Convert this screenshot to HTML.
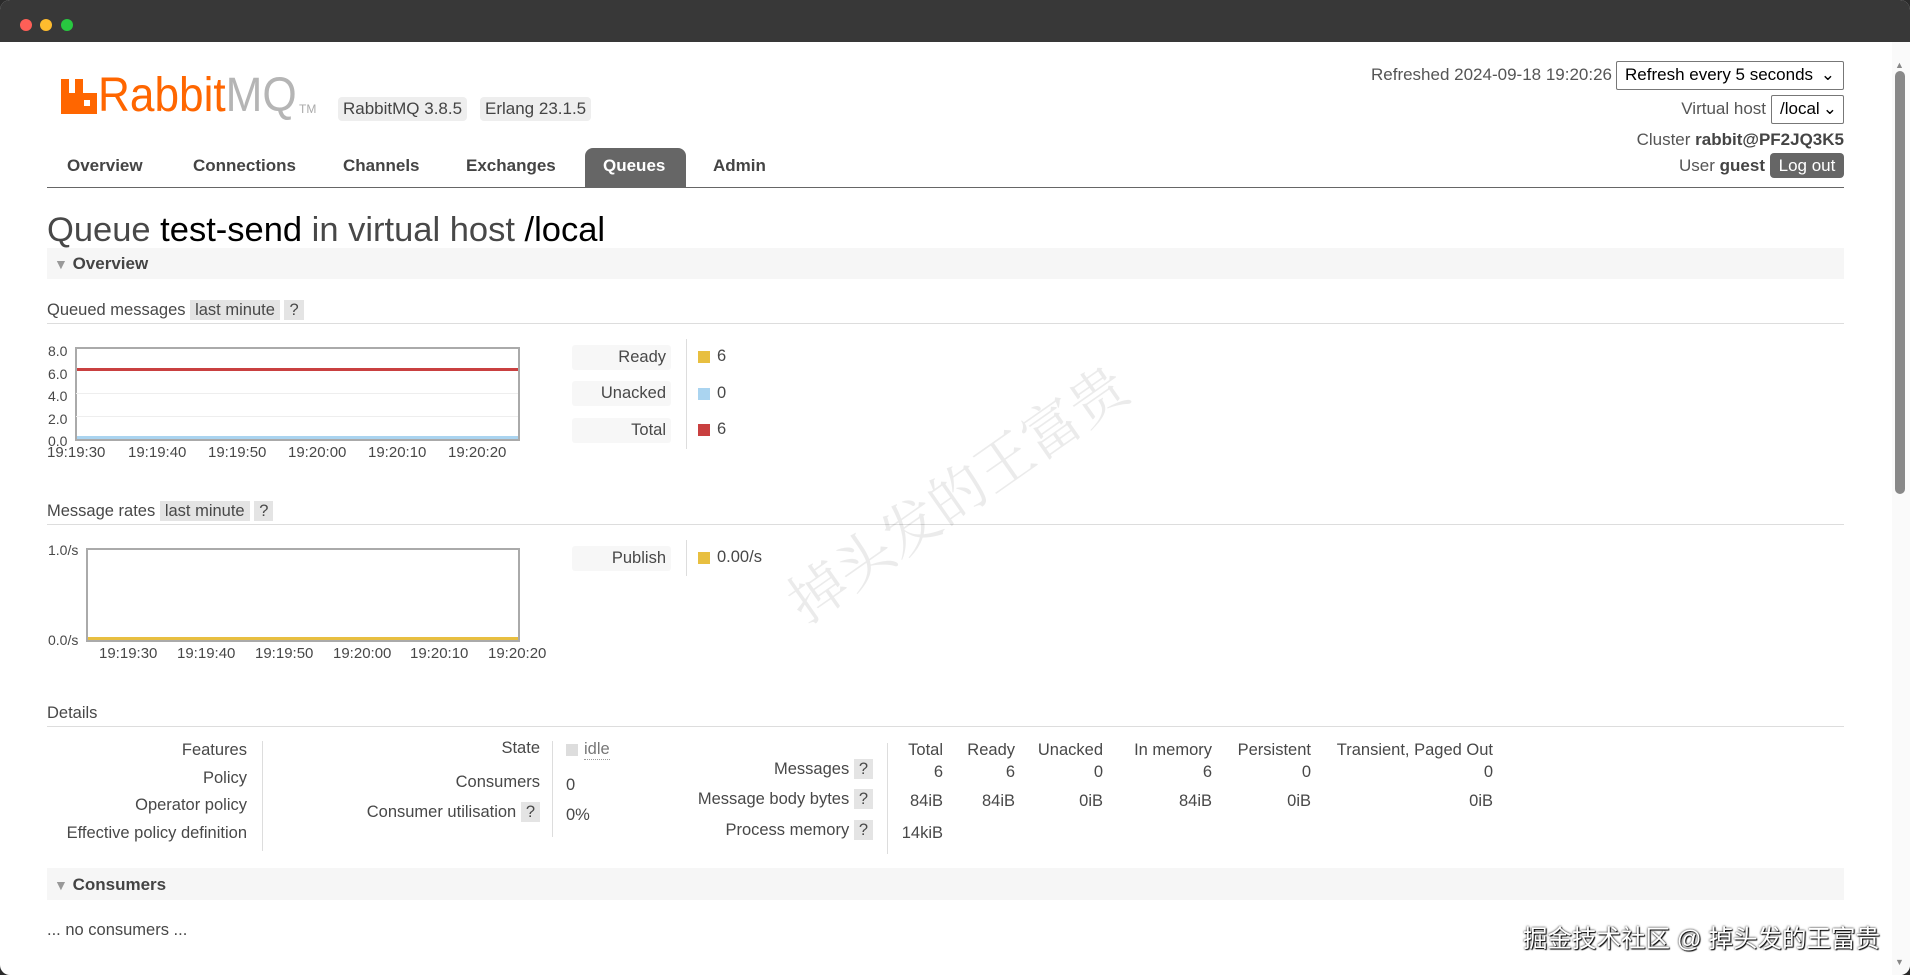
<!DOCTYPE html>
<html><head><meta charset="utf-8"><style>
*{margin:0;padding:0;box-sizing:border-box}
body{width:1910px;height:975px;overflow:hidden;background:#2b2b2b;font-family:"Liberation Sans","Noto Sans CJK SC",sans-serif;color:#484848;font-size:16.5px;position:relative}
.win{position:absolute;left:0;top:0;width:1910px;height:975px;background:#fff;border-radius:10px;overflow:hidden}
.tb{position:absolute;left:0;top:0;width:1910px;height:42px;background:#383838}
.dot{position:absolute;top:19px;width:12px;height:12px;border-radius:50%}
.a{position:absolute;white-space:nowrap}
.r{text-align:right}
.badge{position:absolute;background:#eee;border-radius:4px;padding:2px 5px;font-size:17px;color:#444}
.nav{position:absolute;top:156px;font-weight:bold;font-size:17px;color:#444}
.hr{position:absolute;height:1px;background:#ddd}
.bar{position:absolute;left:47px;width:1797px;background:#f6f6f6}
.sel{position:absolute;border:1px solid #777;background:#fff;font-size:17px;color:#000;padding:3px 8px;border-radius:2px}
.q{background:#e4e4e4;padding:1px 5px}
.lg{position:absolute;left:572px;width:99px;height:25px;background:#f7f7f7;text-align:right;padding-right:5px;line-height:25px;border-radius:3px}
.sw{position:absolute;width:12px;height:12px}
.grid{position:absolute;left:76px;width:442px;height:1px;background:#eee}
.th{position:absolute;top:740px;text-align:right;line-height:20px}
.th div:nth-child(2){margin-top:2px}
.th div:nth-child(3){margin-top:9px}
.th div:nth-child(4){margin-top:12px}
.ax{position:absolute;font-size:15px}
</style></head><body>
<div class="win">
<div class="tb"></div>
<div class="dot" style="left:20px;background:#fe5f57"></div>
<div class="dot" style="left:40px;background:#febc2e"></div>
<div class="dot" style="left:61px;background:#28c840"></div>

<svg class="a" style="left:61px;top:79px" width="36" height="35" viewBox="0 0 36 35"><path d="M0 0h8v14h6V0h8v14h14v21H0z" fill="#f60"/><rect x="23" y="21" width="6" height="6" fill="#fff"/></svg>
<div class="a" style="left:98px;top:68px;font-size:48px;color:#f60;transform:scaleX(.92);transform-origin:left">Rabbit<span style="color:#b5b5b5">MQ</span></div>
<div class="a" style="left:299px;top:102px;font-size:12px;color:#aaa">TM</div>
<div class="badge" style="left:338px;top:97px">RabbitMQ 3.8.5</div>
<div class="badge" style="left:480px;top:97px">Erlang 23.1.5</div>

<div class="nav" style="left:67px">Overview</div>
<div class="nav" style="left:193px">Connections</div>
<div class="nav" style="left:343px">Channels</div>
<div class="nav" style="left:466px">Exchanges</div>
<div class="a" style="left:585px;top:148px;width:101px;height:39px;background:#666;border-radius:8px 8px 0 0"></div>
<div class="nav" style="left:603px;color:#fff">Queues</div>
<div class="nav" style="left:713px">Admin</div>
<div class="a" style="left:47px;top:187px;width:1797px;height:1px;background:#666"></div>

<div class="a r" style="right:298px;top:65px;font-size:17px;color:#555">Refreshed 2024-09-18 19:20:26</div>
<div class="sel" style="left:1616px;top:61px;width:228px;height:29px">Refresh every 5 seconds<span style="position:absolute;right:8px;top:3px">⌄</span></div>
<div class="a r" style="right:144px;top:99px;font-size:17px;color:#555">Virtual host</div>
<div class="sel" style="left:1771px;top:95px;width:73px;height:29px">/local<span style="position:absolute;right:6px;top:3px">⌄</span></div>
<div class="a r" style="right:66px;top:130px;font-size:17px;color:#555">Cluster <b style="color:#444">rabbit@PF2JQ3K5</b></div>
<div class="a r" style="right:145px;top:156px;font-size:17px;color:#555">User <b style="color:#444">guest</b></div>
<div class="a" style="left:1770px;top:153px;width:74px;height:25px;background:#666;color:#fff;border-radius:4px;font-size:17px;text-align:center;line-height:25px">Log out</div>

<div class="a" style="left:47px;top:211px;font-size:34.5px;color:#484848">Queue <span style="color:#000">test-send</span> in virtual host <span style="color:#000">/local</span></div>
<div class="bar" style="top:248px;height:31px"></div>
<div class="a" style="left:54px;top:254px;font-size:17px;font-weight:bold;color:#444"><span style="color:#999;font-size:14px">▼</span> Overview</div>

<div class="a" style="left:47px;top:301px">Queued messages <span class="q">last minute</span> <span class="q">?</span></div>
<div class="hr" style="left:47px;top:323px;width:1797px"></div>
<div class="a" style="left:75px;top:347px;width:445px;height:94px;border:2px solid #aaa"></div>
<div class="grid" style="top:393px"></div><div class="grid" style="top:416px"></div>
<div class="a" style="left:77px;top:368px;width:441px;height:3px;background:#c94040"></div>
<div class="a" style="left:77px;top:436px;width:441px;height:3px;background:#aad4f0"></div>
<div class="a" style="left:48px;top:340px;font-size:14px;line-height:22.5px">8.0<br>6.0<br>4.0<br>2.0<br>0.0</div>
<div class="ax" style="left:47px;top:444px">19:19:30</div><div class="ax" style="left:128px;top:444px">19:19:40</div><div class="ax" style="left:208px;top:444px">19:19:50</div><div class="ax" style="left:288px;top:444px">19:20:00</div><div class="ax" style="left:368px;top:444px">19:20:10</div><div class="ax" style="left:448px;top:444px">19:20:20</div>
<div class="lg" style="top:345px">Ready</div>
<div class="lg" style="top:381px">Unacked</div>
<div class="lg" style="top:418px">Total</div>
<div class="a" style="left:686px;top:339px;width:1px;height:110px;background:#ddd"></div>
<div class="sw" style="left:698px;top:351px;background:#e8bf40"></div><div class="a" style="left:717px;top:347px">6</div>
<div class="sw" style="left:698px;top:388px;background:#aad4f0"></div><div class="a" style="left:717px;top:384px">0</div>
<div class="sw" style="left:698px;top:424px;background:#c94040"></div><div class="a" style="left:717px;top:420px">6</div>

<div class="a" style="left:47px;top:502px">Message rates <span class="q">last minute</span> <span class="q">?</span></div>
<div class="hr" style="left:47px;top:524px;width:1797px"></div>
<div class="a" style="left:86px;top:548px;width:434px;height:94px;border:2px solid #aaa"></div>
<div class="a" style="left:88px;top:637px;width:430px;height:3px;background:#e8bf40"></div>
<div class="a" style="left:48px;top:542px;font-size:14px">1.0/s</div>
<div class="a" style="left:48px;top:632px;font-size:14px">0.0/s</div>
<div class="ax" style="left:99px;top:645px">19:19:30</div><div class="ax" style="left:177px;top:645px">19:19:40</div><div class="ax" style="left:255px;top:645px">19:19:50</div><div class="ax" style="left:333px;top:645px">19:20:00</div><div class="ax" style="left:410px;top:645px">19:20:10</div><div class="ax" style="left:488px;top:645px">19:20:20</div>
<div class="lg" style="top:546px">Publish</div>
<div class="a" style="left:686px;top:540px;width:1px;height:36px;background:#ddd"></div>
<div class="sw" style="left:698px;top:552px;background:#e8bf40"></div><div class="a" style="left:717px;top:548px">0.00/s</div>

<div class="a" style="left:47px;top:704px">Details</div>
<div class="hr" style="left:47px;top:726px;width:1797px"></div>
<div class="a r" style="right:1663px;top:737px;line-height:27.5px">Features<br>Policy<br>Operator policy<br>Effective policy definition</div>
<div class="a" style="left:262px;top:741px;width:1px;height:110px;background:#ddd"></div>
<div class="a r" style="right:1370px;top:739px">State</div>
<div class="a r" style="right:1370px;top:773px">Consumers</div>
<div class="a r" style="right:1370px;top:803px">Consumer utilisation <span class="q">?</span></div>
<div class="a" style="left:552px;top:741px;width:1px;height:96px;background:#ddd"></div>
<div class="sw" style="left:566px;top:744px;background:#ddd"></div>
<div class="a" style="left:584px;top:740px;border-bottom:1px dotted #999;color:#777">idle</div>
<div class="a" style="left:566px;top:776px">0</div>
<div class="a" style="left:566px;top:806px">0%</div>
<div class="a r" style="right:1037px;top:760px">Messages <span class="q">?</span></div>
<div class="a r" style="right:1037px;top:790px">Message body bytes <span class="q">?</span></div>
<div class="a r" style="right:1037px;top:821px">Process memory <span class="q">?</span></div>
<div class="a" style="left:887px;top:743px;width:1px;height:111px;background:#ddd"></div>
<div class="th" style="right:967px"><div>Total</div><div>6</div><div>84iB</div><div>14kiB</div></div>
<div class="th" style="right:895px"><div>Ready</div><div>6</div><div>84iB</div></div>
<div class="th" style="right:807px"><div>Unacked</div><div>0</div><div>0iB</div></div>
<div class="th" style="right:698px"><div>In memory</div><div>6</div><div>84iB</div></div>
<div class="th" style="right:599px"><div>Persistent</div><div>0</div><div>0iB</div></div>
<div class="th" style="right:417px"><div>Transient, Paged Out</div><div>0</div><div>0iB</div></div>

<div class="bar" style="top:868px;height:32px"></div>
<div class="a" style="left:54px;top:875px;font-size:17px;font-weight:bold;color:#444"><span style="color:#999;font-size:14px">▼</span> Consumers</div>
<div class="a" style="left:47px;top:921px">... no consumers ...</div>

<div class="a" style="left:756px;top:450px;font-size:57px;color:rgba(0,0,0,.08);transform:rotate(-35deg);font-family:'Noto Serif CJK SC',serif">掉头发的王富贵</div>
<div class="a" style="left:1523px;top:920px;font-size:24.5px;color:#fff;text-shadow:0 0 2px #000,1px 1px 1px #000">掘金技术社区 @ 掉头发的王富贵</div>

<div class="a" style="left:1892px;top:42px;width:18px;height:933px;background:#fafafa"></div>
<div class="a" style="left:1895px;top:71px;width:10px;height:423px;background:#888;border-radius:5px"></div>
<div class="a" style="left:1895px;top:60px;font-size:9px;color:#888">▲</div>
<div class="a" style="left:1895px;top:957px;font-size:9px;color:#888">▼</div>
</div>
</body></html>
